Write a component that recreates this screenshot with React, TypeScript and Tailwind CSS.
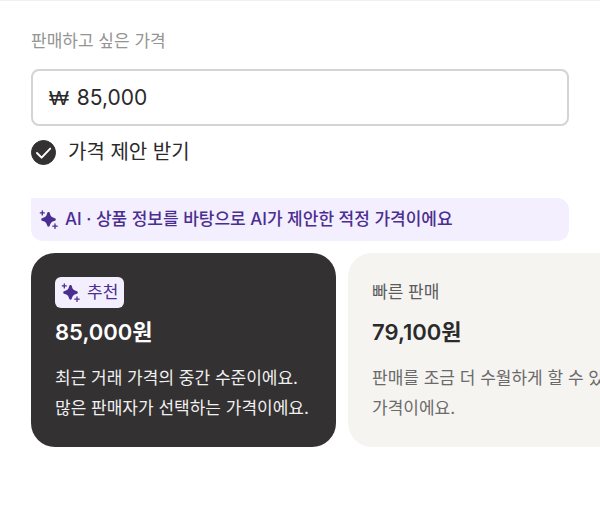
import React, { useState } from 'react';
import { clsx } from 'clsx';

const options = [
  {
    id: 'recommended',
    label: '추천',
    price: '85,000원',
    lines: ['최근 거래 가격의 중간 수준이에요.', '많은 판매자가 선택하는 가격이에요.'],
    recommended: true,
  },
  {
    id: 'fast',
    label: '빠른 판매',
    price: '79,100원',
    lines: ['판매를 조금 더 수월하게 할 수 있는', '가격이에요.'],
    recommended: false,
  },
];

function Sparkles() {
  return (
    <svg viewBox="0 0 20 20" className="h-5 w-5 shrink-0" fill="currentColor" aria-hidden="true">
      <path d="M9.500 2.100c.9 0 1.200.6 1.400 1.400.6 2.700 1.700 3.800 4.400 4.400.9.2 1.500.6 1.500 1.500s-.6 1.300-1.500 1.500c-2.700.6-3.800 1.700-4.400 4.400-.2.8-.5 1.400-1.400 1.400s-1.200-.6-1.400-1.400c-.6-2.700-1.700-3.800-4.400-4.400-.9-.2-1.500-.6-1.500-1.500s.6-1.300 1.500-1.500c2.700-.6 3.800-1.700 4.400-4.400.2-.8.5-1.400 1.400-1.400z" />
      <path d="M3.300.9v4M1.300 2.900h4M16 14v4.400M13.800 16.200h4.400" stroke="currentColor" strokeWidth="1.300" strokeLinecap="round" />
    </svg>
  );
}

export default function App() {
  const [price, setPrice] = useState('85,000');
  const [acceptOffers, setAcceptOffers] = useState(true);

  return (
    <main className="min-h-screen overflow-hidden border-t border-[#f0f0f0] bg-white px-[31px] pt-7 pb-8 font-['Inter','Noto_Sans_CJK_KR',sans-serif] text-[17px] text-[#2b2a2b]">
      <label htmlFor="price" className="block leading-6 text-[#949494]">
        판매하고 싶은 가격
      </label>

      <div className="mt-4 flex h-[57px] items-center gap-2 rounded-lg border-2 border-[#d4d4d4] px-4 text-[21px]">
        <span className="font-['Liberation_Sans',sans-serif]">₩</span>
        <input
          id="price"
          type="text"
          inputMode="numeric"
          value={price}
          onChange={(e) => setPrice(e.target.value)}
          className="min-w-0 flex-1 bg-transparent outline-none"
        />
      </div>

      <label className="mt-3 flex items-center gap-3 text-[20px] leading-7">
        <span className="grid h-[25px] w-[25px] shrink-0 place-items-center">
          <input
            type="checkbox"
            checked={acceptOffers}
            onChange={(e) => setAcceptOffers(e.target.checked)}
            className="col-start-1 row-start-1 h-[25px] w-[25px] appearance-none rounded-full border border-[#333132] checked:bg-[#333132]"
          />
          <svg viewBox="0 0 25 25" className="pointer-events-none col-start-1 row-start-1 h-[25px] w-[25px]" fill="none" aria-hidden="true">
            <path d="M6 13l4.600 4.600 8.600-9" stroke="white" strokeWidth="2" strokeLinecap="round" strokeLinejoin="round" />
          </svg>
        </span>
        가격 제안 받기
      </label>

      <div className="mt-8 flex h-[43px] items-center gap-1.5 rounded-xl rounded-tl-none bg-[#f3effe] px-2 font-medium text-[#4b2e91]">
        <Sparkles />
        <p>AI · 상품 정보를 바탕으로 AI가 제안한 적정 가격이에요</p>
      </div>

      <div className="mt-3 -mr-[31px] flex gap-3 overflow-hidden">
        {options.map((option) => (
          <button
            key={option.id}
            type="button"
            onClick={() => setPrice(option.price.replace('원', ''))}
            className={clsx(
              'flex w-[305px] shrink-0 flex-col items-start rounded-3xl p-6 text-left',
              option.recommended ? 'bg-[#343132] text-white' : 'bg-[#f5f4f1] text-[#2b2a2b]'
            )}
          >
            {option.recommended ? (
              <span className="flex h-[31px] items-center gap-1.5 rounded-md bg-[#f3effe] px-1.5 text-[#4b2e91]">
                <Sparkles />
                {option.label}
              </span>
            ) : (
              <span className="flex h-[31px] items-center text-[#5c5b5c]">{option.label}</span>
            )}
            <strong className="mt-2 text-[22px] leading-8 font-semibold">{option.price}</strong>
            <span
              className={clsx(
                'mt-[15px] leading-[30px] whitespace-nowrap',
                option.recommended ? 'text-[#f0f0f0]' : 'text-[#6b6a6a]'
              )}
            >
              {option.lines.map((line) => (
                <span key={line} className="block">{line}</span>
              ))}
            </span>
          </button>
        ))}
      </div>
    </main>
  );
}
